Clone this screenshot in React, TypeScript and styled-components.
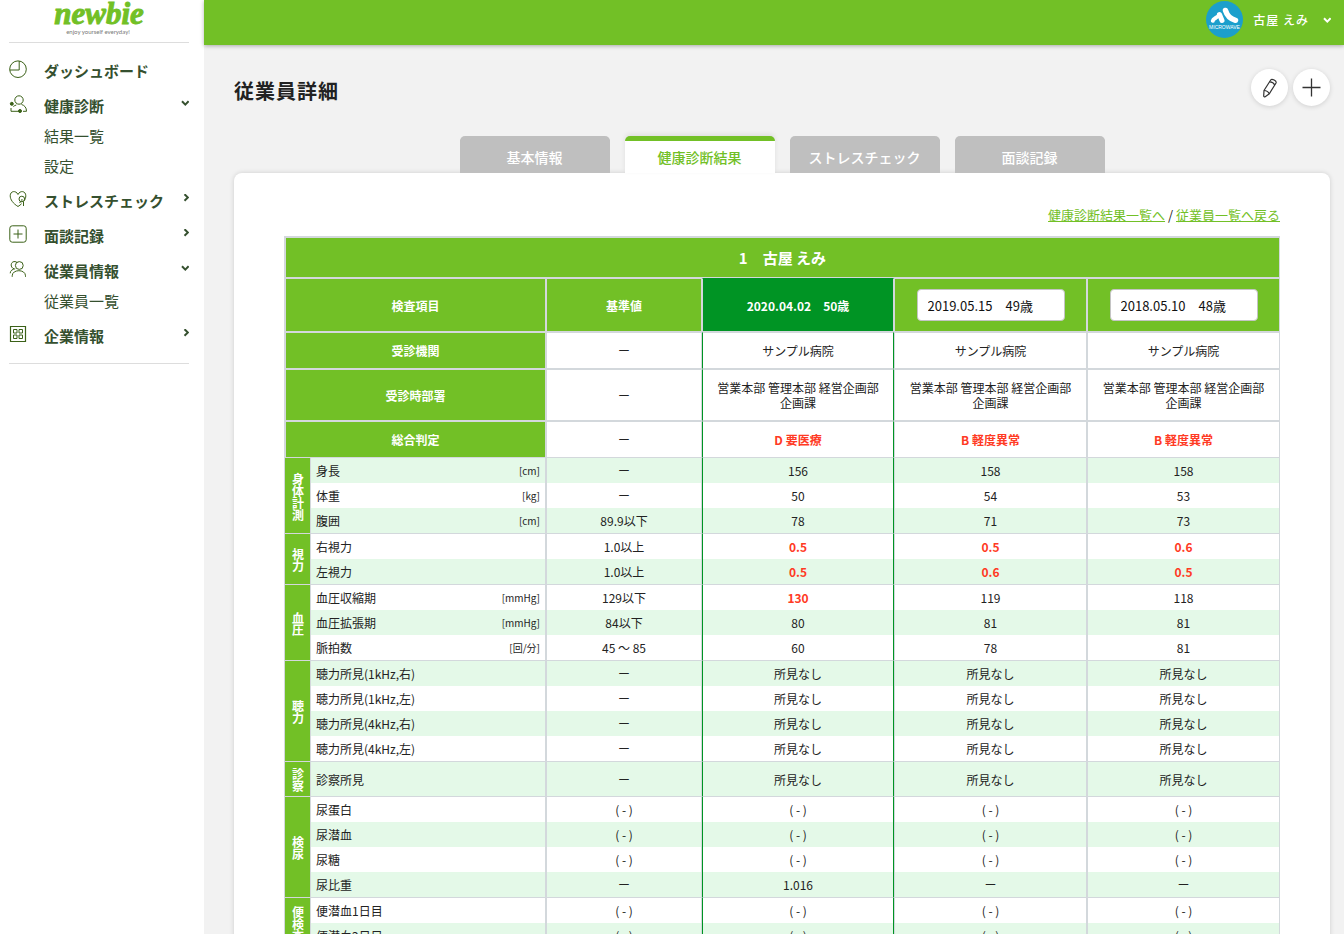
import React from "react";
import styled, { createGlobalStyle, css } from "styled-components";

const color = {
  green: "#72c026",
  deep: "#009424",
  line: "#d3d8dc",
  stripe: "#e4f9e8",
  menu: "#35502f",
  icon: "#3b6118",
  red: "#ff3a24",
};

const GlobalStyle = createGlobalStyle`
  *, *::before, *::after { box-sizing: border-box; }
  body {
    margin: 0;
    background: #f2f2f2;
    color: #222;
    font-family: "Noto Sans CJK JP", sans-serif;
    font-size: 12px;
    line-height: 15px;
  }
  button, select { font-family: inherit; }
`;

const Shell = styled.div`
  display: flex;
  height: 100vh;
  overflow: hidden;
`;

const Sidebar = styled.aside`
  flex: 0 0 204px;
  padding: 0 15px 0 9px;
  background: #fff;
`;

const Logo = styled.a`
  display: flex;
  justify-content: center;
  height: 43px;
  border-bottom: 1px solid #ddd;
`;

const Menu = styled.ul`
  margin: 0;
  padding: 10px 0;
  border-bottom: 1px solid #ddd;
  list-style: none;
`;

const SubMenu = styled.ul`
  margin: 0;
  padding: 0 0 0 35px;
  list-style: none;
`;

const MenuLink = styled.a`
  display: flex;
  align-items: center;
  height: 35px;
  color: ${color.menu};
  font-size: 15px;
  font-weight: bold;
  text-decoration: none;
`;

const MenuGlyph = styled.svg`
  flex: none;
  margin: 0 17px 4px 0;
`;

const MenuArrow = styled.span`
  display: flex;
  margin: 0 0 6px auto;
`;

const SubLink = styled.a`
  display: block;
  height: 30px;
  color: ${color.menu};
  font-size: 15px;
  line-height: 26px;
  text-decoration: none;
`;

const Page = styled.div`
  display: flex;
  flex: 1;
  flex-direction: column;
  min-width: 0;
`;

const TopBar = styled.header`
  display: flex;
  flex: none;
  justify-content: flex-end;
  height: 45px;
  padding: 1px 13px 0 0;
  background: ${color.green};
  box-shadow: 0 1px 4px rgba(0, 0, 0, 0.3);
  z-index: 1;
`;

const UserButton = styled.button`
  display: flex;
  align-items: center;
  gap: 10px;
  height: 37px;
  padding: 0;
  border: 0;
  background: none;
  color: #fff;
  font-size: 12px;
  font-weight: 500;
`;

const UserName = styled.span`
  margin-right: 4px;
  letter-spacing: 1px;
`;

const Main = styled.main`
  flex: 1;
  padding: 24px 14px 30px 30px;
  overflow-y: auto;
  scrollbar-width: none;
`;

const TitleRow = styled.div`
  display: flex;
  justify-content: space-between;
  height: 67px;
`;

const Title = styled.h1`
  margin: 7px 0 0;
  font-size: 20px;
  line-height: 30px;
  letter-spacing: 1px;
`;

const Actions = styled.div`
  display: flex;
  gap: 5px;
`;

const RoundButton = styled.button`
  display: grid;
  place-items: center;
  width: 37px;
  height: 37px;
  padding: 0;
  border: 0;
  border-radius: 50%;
  background: #fff;
  box-shadow: 0 1px 5px rgba(0, 0, 0, 0.14);
`;

const Tabs = styled.nav`
  display: flex;
  justify-content: center;
  gap: 15px;
`;

const Tab = styled.a<{ $active?: boolean }>`
  width: 150px;
  height: 37px;
  border-top: 5px solid #bfbfbf;
  border-radius: 5px 5px 0 0;
  background: #bfbfbf;
  color: #fff;
  font-size: 14px;
  font-weight: 500;
  line-height: 33px;
  text-align: center;
  text-decoration: none;
  ${(p) =>
    p.$active &&
    css`
      position: relative;
      border-color: ${color.green};
      background: #fff;
      color: ${color.green};
      box-shadow: 0 -2px 5px rgba(0, 0, 0, 0.08);
    `}
`;

const Card = styled.section`
  padding: 32px 50px 50px;
  border-radius: 8px;
  background: #fff;
  box-shadow: 0 0 5px rgba(0, 0, 0, 0.15);
`;

const CardBody = styled.div`
  position: relative;
`;

const BackLinks = styled.p`
  margin: 0 0 11px;
  font-size: 13px;
  line-height: 20px;
  text-align: right;

  a {
    color: ${color.green};
  }
`;

const ResultTable = styled.table`
  width: 100%;
  border: 1px solid ${color.line};
  border-width: 1px 0 0 1px;
  border-spacing: 0;
  table-layout: fixed;
`;

const Col = styled.col<{ $width?: number }>`
  width: ${(p) => (p.$width ? `${p.$width}px` : "auto")};
`;

const HeadRow = styled.tr<{ $height: number }>`
  height: ${(p) => p.$height}px;
`;

const HeadCell = styled.th<{ $current?: boolean; $large?: boolean }>`
  padding: 0;
  border: 1px solid ${color.line};
  background: ${color.green};
  color: #fff;
  font-size: ${(p) => (p.$large ? 15 : 12)}px;
  ${(p) =>
    p.$current &&
    css`
      border-top-color: ${color.deep};
      background: ${color.deep};
    `}
`;

const DateSelect = styled.select`
  display: block;
  width: 148px;
  height: 32px;
  margin: 0 auto;
  padding: 0 10px;
  border: 1px solid #c4c4c4;
  border-radius: 4px;
  appearance: none;
  background: #fff;
  color: #111;
  font-size: 13px;
`;

const currentEdges = css`
  border-left-color: ${color.deep};
  border-right-color: ${color.deep};
`;

const InfoCell = styled.td<{ $current?: boolean; $alert?: boolean }>`
  padding: 0 10px;
  border: 1px solid ${color.line};
  text-align: center;
  ${(p) => p.$alert && `color: ${color.red}; font-weight: bold;`}
  ${(p) => p.$current && currentEdges}
`;

const CategoryCell = styled.th`
  padding: 2px 0 0;
  border: 1px solid ${color.line};
  border-width: 0 1px 1px 0;
  background: ${color.green};
  color: #fff;
`;

const Vertical = styled.span`
  display: inline-block;
  line-height: 14px;
  writing-mode: vertical-rl;
  vertical-align: middle;
`;

const DataRow = styled.tr<{ $striped: boolean; $last: boolean; $tall: boolean }>`
  height: ${(p) => (p.$tall ? 35 : p.$last ? 26 : 25)}px;
  background: ${(p) => (p.$striped ? color.stripe : "#fff")};

  > td,
  > th {
    border-bottom-width: ${(p) => (p.$last ? 1 : 0)}px;
  }
`;

const ItemCell = styled.th`
  padding: 0 5px;
  border: 0 solid ${color.line};
  border-right-width: 1px;
  font-weight: normal;
`;

const ItemLabel = styled.div`
  display: flex;
  justify-content: space-between;
`;

const Unit = styled.span`
  font-size: 10px;
`;

const DataCell = styled.td<{ $current?: boolean; $alert?: boolean }>`
  padding: 0;
  border: 0 solid ${color.line};
  border-left-width: 1px;
  border-right-width: 1px;
  text-align: center;
  ${(p) => p.$alert && `color: ${color.red}; font-weight: bold;`}
  ${(p) => p.$current && currentEdges}
`;

const Chevron = ({ down, tint = color.menu }: { down?: boolean; tint?: string }) => (
  <svg width="8" height="8" viewBox="0 0 8 8" fill="none" stroke={tint} strokeWidth="2">
    <path d={down ? "M1 2.200 4.300 5.600 7.600 2.200" : "M3.500 .2 6.900 3.500 3.500 6.800"} />
  </svg>
);

const iconShapes: Record<string, React.ReactNode> = {
  dashboard: (
    <>
      <circle cx="9" cy="9.200" r="8.300" />
      <path d="M.7 10H10.200V1" />
    </>
  ),
  health: (
    <>
      <circle cx="10" cy="5" r="4.200" />
      <path d="M2 13v3.300h9M4.300 11.500c1-.8 2-1.200 3-1.500M12.500 9.500c3 .8 5 3 5 6.800H14" />
      <circle cx="2.800" cy="8.800" r="1.500" fill={color.icon} />
      <circle cx="11" cy="16" r="1.500" fill={color.icon} />
    </>
  ),
  stress: (
    <>
      <path d="M9 16.500C4 13.500 1.200 9.500 1.200 5.800 1.200.8 7 .1 9 4.500 11 .1 16.800.8 16.800 5.800c0 1.800-.6 3.500-1.600 5" />
      <path d="M9 16.500c1.500-.9 2.600-1.800 3.600-2.800" />
      <circle cx="12.800" cy="9" r="2.800" />
      <path d="M13 9c.2 2.400-1.400 3.300-2.600 3.600M14.500 11.500v4.500" />
    </>
  ),
  interview: (
    <>
      <rect x=".8" y=".8" width="16.400" height="16.400" rx="2.500" />
      <path d="M9 4.500v9M4.500 9h9" />
    </>
  ),
  employee: (
    <>
      <circle cx="10.300" cy="5.500" r="3.900" />
      <path d="M3.200 16.800v-1c0-6.800 13.300-6.800 13.300 0v1" />
      <path d="M5 8.800C1 7.500 1.500 2 5 1.600c1.500-.2 2.800.4 3.500 1.400M1.200 13.300c0-2.500 2.300-4.300 5-4.500" />
    </>
  ),
  company: (
    <>
      <path strokeWidth="1.200" d="M1.500 1.500h15v15h-15z" />
      <path d="M4.500 4.500h3.500v3.500H4.500zM10 4.500h3.500v3.500H10zM4.500 10h3.500v3.500H4.500zM10 10h3.500v3.500H10z" />
    </>
  ),
};

const MenuIcon = ({ name }: { name: string }) => (
  <MenuGlyph width="18" height="18" viewBox="0 0 18 18" fill="none" stroke={color.icon} strokeWidth="1">
    {iconShapes[name]}
  </MenuGlyph>
);

const LogoMark = () => (
  <svg width="100" height="42" viewBox="0 0 100 42" textAnchor="middle">
    <text
      x="50"
      y="24"
      fontFamily="Liberation Serif, serif"
      fontSize="31"
      fontStyle="italic"
      fontWeight="bold"
      fill={color.green}
      stroke={color.green}
    >
      newbie
    </text>
    <text x="49" y="34" fontFamily="Lato, sans-serif" fontSize="6" fill="#777">
      enjoy yourself everyday!
    </text>
  </svg>
);

const Avatar = () => (
  <svg width="37" height="37" viewBox="0 0 37 37">
    <circle cx="18.500" cy="18.500" r="18.500" fill="#1b9fcc" />
    <g stroke="#fff" strokeLinecap="round" strokeLinejoin="round" fill="none">
      <path strokeWidth="4" d="M6.800 19.800c.5-3 4-2.500 6.200-5.800" />
      <path strokeWidth="5" d="M13.500 13.500l2.500 6" />
      <path strokeWidth="5.500" d="M19.500 9.500c1.500 5 5 8.500 10 9.800" />
    </g>
    <text x="18.500" y="28" textAnchor="middle" fontFamily="Liberation Sans, sans-serif" fontSize="5" fill="#fff">
      MICROWAVE
    </text>
  </svg>
);

type MenuEntry = { label: string; icon: string; open?: boolean; leaf?: boolean; children?: string[] };

const menu: MenuEntry[] = [
  { label: "ダッシュボード", icon: "dashboard", leaf: true },
  { label: "健康診断", icon: "health", open: true, children: ["結果一覧", "設定"] },
  { label: "ストレスチェック", icon: "stress" },
  { label: "面談記録", icon: "interview" },
  { label: "従業員情報", icon: "employee", open: true, children: ["従業員一覧"] },
  { label: "企業情報", icon: "company" },
];

const tabs = ["基本情報", "健康診断結果", "ストレスチェック", "面談記録"];

type Item = { name: string; unit?: string; values: string[]; alert?: boolean[] };
type Group = { name: string; tall?: boolean; items: Item[] };

const same = (name: string, value: string, base = value): Item => ({
  name,
  values: [base, value, value, value],
});
const all = [true, true, true];

const groups: Group[] = [
  {
    name: "身体計測",
    items: [
      { name: "身長", unit: "[cm]", values: ["ー", "156", "158", "158"] },
      { name: "体重", unit: "[kg]", values: ["ー", "50", "54", "53"] },
      { name: "腹囲", unit: "[cm]", values: ["89.9以下", "78", "71", "73"] },
    ],
  },
  {
    name: "視力",
    items: [
      { name: "右視力", values: ["1.0以上", "0.5", "0.5", "0.6"], alert: all },
      { name: "左視力", values: ["1.0以上", "0.5", "0.6", "0.5"], alert: all },
    ],
  },
  {
    name: "血圧",
    items: [
      { name: "血圧収縮期", unit: "[mmHg]", values: ["129以下", "130", "119", "118"], alert: [true] },
      { name: "血圧拡張期", unit: "[mmHg]", values: ["84以下", "80", "81", "81"] },
      { name: "脈拍数", unit: "[回/分]", values: ["45 ～ 85", "60", "78", "81"] },
    ],
  },
  {
    name: "聴力",
    items: ["1kHz,右", "1kHz,左", "4kHz,右", "4kHz,左"].map((n) => same(`聴力所見(${n})`, "所見なし", "ー")),
  },
  { name: "診察", tall: true, items: [same("診察所見", "所見なし", "ー")] },
  {
    name: "検尿",
    items: [
      same("尿蛋白", "( - )"),
      same("尿潜血", "( - )"),
      same("尿糖", "( - )"),
      { name: "尿比重", values: ["ー", "1.016", "ー", "ー"] },
    ],
  },
  { name: "便検査", items: [same("便潜血1日目", "( - )"), same("便潜血2日目", "( - )")] },
];

const summary = [
  { name: "受診機関", value: ["サンプル病院", "サンプル病院", "サンプル病院"], height: 37 },
  {
    name: "受診時部署",
    value: Array(3).fill("営業本部 管理本部 経営企画部 企画課"),
    height: 52,
  },
  { name: "総合判定", value: ["D 要医療", "B 軽度異常", "B 軽度異常"], height: 37, alert: true },
];

const rows = groups.flatMap((group) => group.items.map((item, index) => ({ group, item, index })));

export default function App() {
  return (
    <Shell>
      <GlobalStyle />
      <Sidebar>
        <Logo href="#">
          <LogoMark />
        </Logo>
        <Menu>
          {menu.map((m) => (
            <li key={m.label}>
              <MenuLink href="#">
                <MenuIcon name={m.icon} />
                {m.label}
                {!m.leaf && (
                  <MenuArrow>
                    <Chevron down={m.open} />
                  </MenuArrow>
                )}
              </MenuLink>
              {m.children && (
                <SubMenu>
                  {m.children.map((c) => (
                    <li key={c}>
                      <SubLink href="#">{c}</SubLink>
                    </li>
                  ))}
                </SubMenu>
              )}
            </li>
          ))}
        </Menu>
      </Sidebar>
      <Page>
        <TopBar>
          <UserButton>
            <Avatar />
            <UserName>古屋 えみ</UserName>
            <Chevron down tint="#fff" />
          </UserButton>
        </TopBar>
        <Main>
          <TitleRow>
            <Title>従業員詳細</Title>
            <Actions>
              <RoundButton aria-label="編集">
                <svg width="20" height="20" viewBox="0 0 20 20" fill="none" stroke="#333" strokeWidth="1.200">
                  <path d="M4 12.500 10.700 2c1.200-1.700 6.300.9 5.300 3L9.300 15.800l-4.100 2.900c-.7.400-1.500 0-1.500-.7L4 12.500Z" />
                  <path d="M9.600 3.900c2 0 4.200 1.300 5.100 3.200M4 12.500c2 0 4.400 1.400 5.300 3.300" />
                </svg>
              </RoundButton>
              <RoundButton aria-label="追加">
                <svg width="19" height="19" viewBox="0 0 19 19" stroke="#333" strokeWidth="1.300">
                  <path d="M9.500.5v18M.5 9.500h18" />
                </svg>
              </RoundButton>
            </Actions>
          </TitleRow>
          <Tabs>
            {tabs.map((t, i) => (
              <Tab key={t} href="#" $active={i === 1}>
                {t}
              </Tab>
            ))}
          </Tabs>
          <Card>
            <CardBody>
              <BackLinks>
                <a href="#">健康診断結果一覧へ</a> / <a href="#">従業員一覧へ戻る</a>
              </BackLinks>
              <ResultTable>
                <colgroup>
                  <Col $width={26} />
                  <Col $width={235} />
                  <Col $width={156} />
                  <Col $width={192} />
                  <Col />
                  <Col />
                </colgroup>
                <thead>
                  <HeadRow $height={41}>
                    <HeadCell colSpan={6} $large>
                      1　古屋 えみ
                    </HeadCell>
                  </HeadRow>
                  <HeadRow $height={54}>
                    <HeadCell colSpan={2}>検査項目</HeadCell>
                    <HeadCell>基準値</HeadCell>
                    <HeadCell $current>2020.04.02　50歳</HeadCell>
                    {["2019.05.15　49歳", "2018.05.10　48歳"].map((d) => (
                      <HeadCell key={d}>
                        <DateSelect aria-label="受診日">
                          <option>{d}</option>
                        </DateSelect>
                      </HeadCell>
                    ))}
                  </HeadRow>
                  {summary.map((s) => (
                    <HeadRow key={s.name} $height={s.height}>
                      <HeadCell colSpan={2}>{s.name}</HeadCell>
                      <InfoCell>ー</InfoCell>
                      {s.value.map((v, i) => (
                        <InfoCell key={i} $current={i === 0} $alert={s.alert}>
                          {v}
                        </InfoCell>
                      ))}
                    </HeadRow>
                  ))}
                </thead>
                <tbody>
                  {rows.map(({ group, item, index }, n) => (
                    <DataRow
                      key={item.name}
                      $striped={n % 2 === 0}
                      $last={index === group.items.length - 1}
                      $tall={!!group.tall}
                    >
                      {index === 0 && (
                        <CategoryCell rowSpan={group.items.length} style={{ borderBottomWidth: 1 }}>
                          <Vertical>{group.name}</Vertical>
                        </CategoryCell>
                      )}
                      <ItemCell>
                        <ItemLabel>
                          {item.name}
                          {item.unit && <Unit>{item.unit}</Unit>}
                        </ItemLabel>
                      </ItemCell>
                      {item.values.map((v, i) => (
                        <DataCell key={i} $current={i === 1} $alert={i > 0 && item.alert?.[i - 1]}>
                          {v}
                        </DataCell>
                      ))}
                    </DataRow>
                  ))}
                </tbody>
              </ResultTable>
            </CardBody>
          </Card>
        </Main>
      </Page>
    </Shell>
  );
}
